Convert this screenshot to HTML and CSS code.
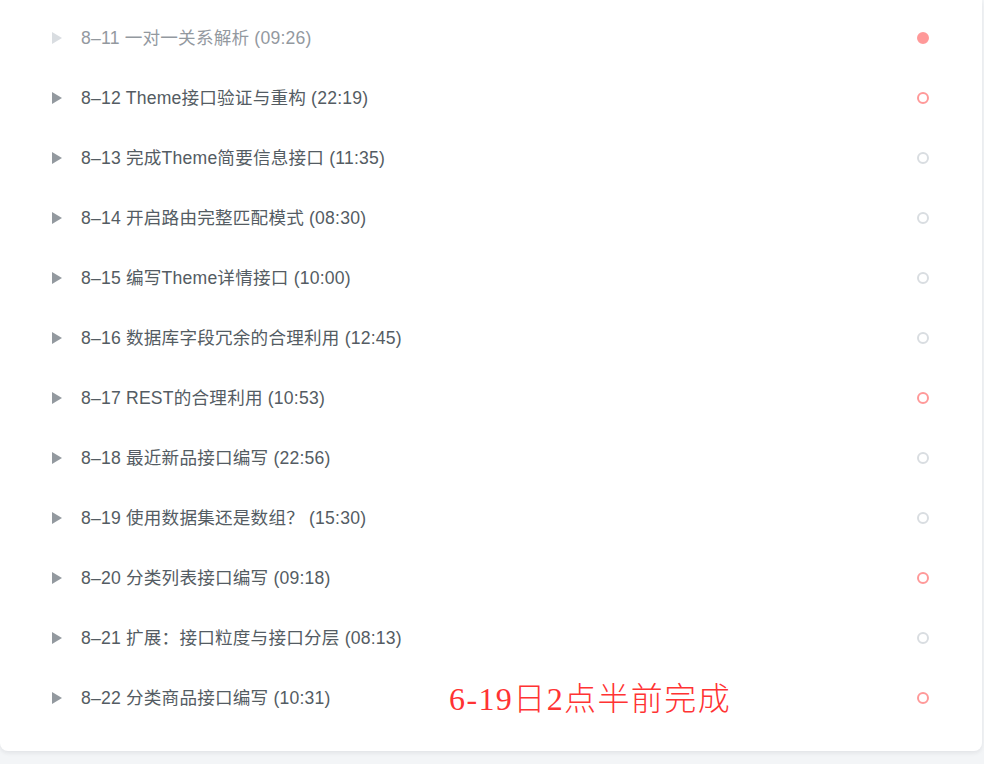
FILE: index.html
```html
<!DOCTYPE html>
<html lang="zh-CN">
<head>
<meta charset="utf-8">
<title>章节列表</title>
<link rel="stylesheet" href="styles.css">
</head>
<body>
<div class="card">
  <ul class="list">
    <li class="row done"><span class="tri"></span><span class="title">8–11 一对一关系解析 (09:26)</span><span class="dot filled"></span></li>
    <li class="row"><span class="tri"></span><span class="title">8–12 Theme接口验证与重构 (22:19)</span><span class="dot pink"></span></li>
    <li class="row"><span class="tri"></span><span class="title">8–13 完成Theme简要信息接口 (11:35)</span><span class="dot"></span></li>
    <li class="row"><span class="tri"></span><span class="title">8–14 开启路由完整匹配模式 (08:30)</span><span class="dot"></span></li>
    <li class="row"><span class="tri"></span><span class="title">8–15 编写Theme详情接口 (10:00)</span><span class="dot"></span></li>
    <li class="row"><span class="tri"></span><span class="title">8–16 数据库字段冗余的合理利用 (12:45)</span><span class="dot"></span></li>
    <li class="row"><span class="tri"></span><span class="title">8–17 REST的合理利用 (10:53)</span><span class="dot pink"></span></li>
    <li class="row"><span class="tri"></span><span class="title">8–18 最近新品接口编写 (22:56)</span><span class="dot"></span></li>
    <li class="row"><span class="tri"></span><span class="title">8–19 使用数据集还是数组？ (15:30)</span><span class="dot"></span></li>
    <li class="row"><span class="tri"></span><span class="title">8–20 分类列表接口编写 (09:18)</span><span class="dot pink"></span></li>
    <li class="row"><span class="tri"></span><span class="title">8–21 扩展：接口粒度与接口分层 (08:13)</span><span class="dot"></span></li>
    <li class="row"><span class="tri"></span><span class="title">8–22 分类商品接口编写 (10:31)</span><span class="note">6-19日2点半前完成</span><span class="dot pink"></span></li>
  </ul>
</div>
</body>
</html>
```

FILE: styles.css
```css
html, body {
  margin: 0;
  padding: 0;
}
body {
  background: #f3f5f7;
  width: 984px;
  height: 764px;
  overflow: hidden;
  font-family: "Liberation Sans", "Noto Sans CJK SC", sans-serif;
}
.card {
  width: 982px;
  background: #fff;
  border-radius: 0 0 8px 8px;
  box-shadow: 0 2px 4px rgba(28, 31, 33, 0.08);
  padding: 8px 0 23px;
}
.list {
  list-style: none;
  margin: 0;
  padding: 0;
}
.row {
  position: relative;
  height: 60px;
  display: flex;
  align-items: center;
  padding: 0 53px 0 52px;
}
.tri {
  width: 0;
  height: 0;
  border-top: 6px solid transparent;
  border-bottom: 6px solid transparent;
  border-left: 10px solid #93999f;
  margin-right: 19px;
}
.title {
  flex: 1;
  font-size: 17.6px;
  color: #545c63;
  white-space: nowrap;
  letter-spacing: 0.2px;
  margin-bottom: 4px;
}
.done .tri {
  border-left-color: #d9dde1;
}
.done .title {
  color: #93999f;
}
.dot {
  width: 8px;
  height: 8px;
  border-radius: 50%;
  border: 2px solid #d9dde1;
}
.dot.pink {
  border-color: #f99;
}
.dot.filled {
  border-color: #f99;
  background: #f99;
}
.note {
  position: absolute;
  left: 449px;
  top: 13px;
  line-height: 36px;
  font-family: "Liberation Serif", "Noto Sans CJK SC", serif;
  font-size: 32px;
  font-weight: 300;
  color: #f33;
  white-space: nowrap;
  letter-spacing: 1.4px;
}
```
